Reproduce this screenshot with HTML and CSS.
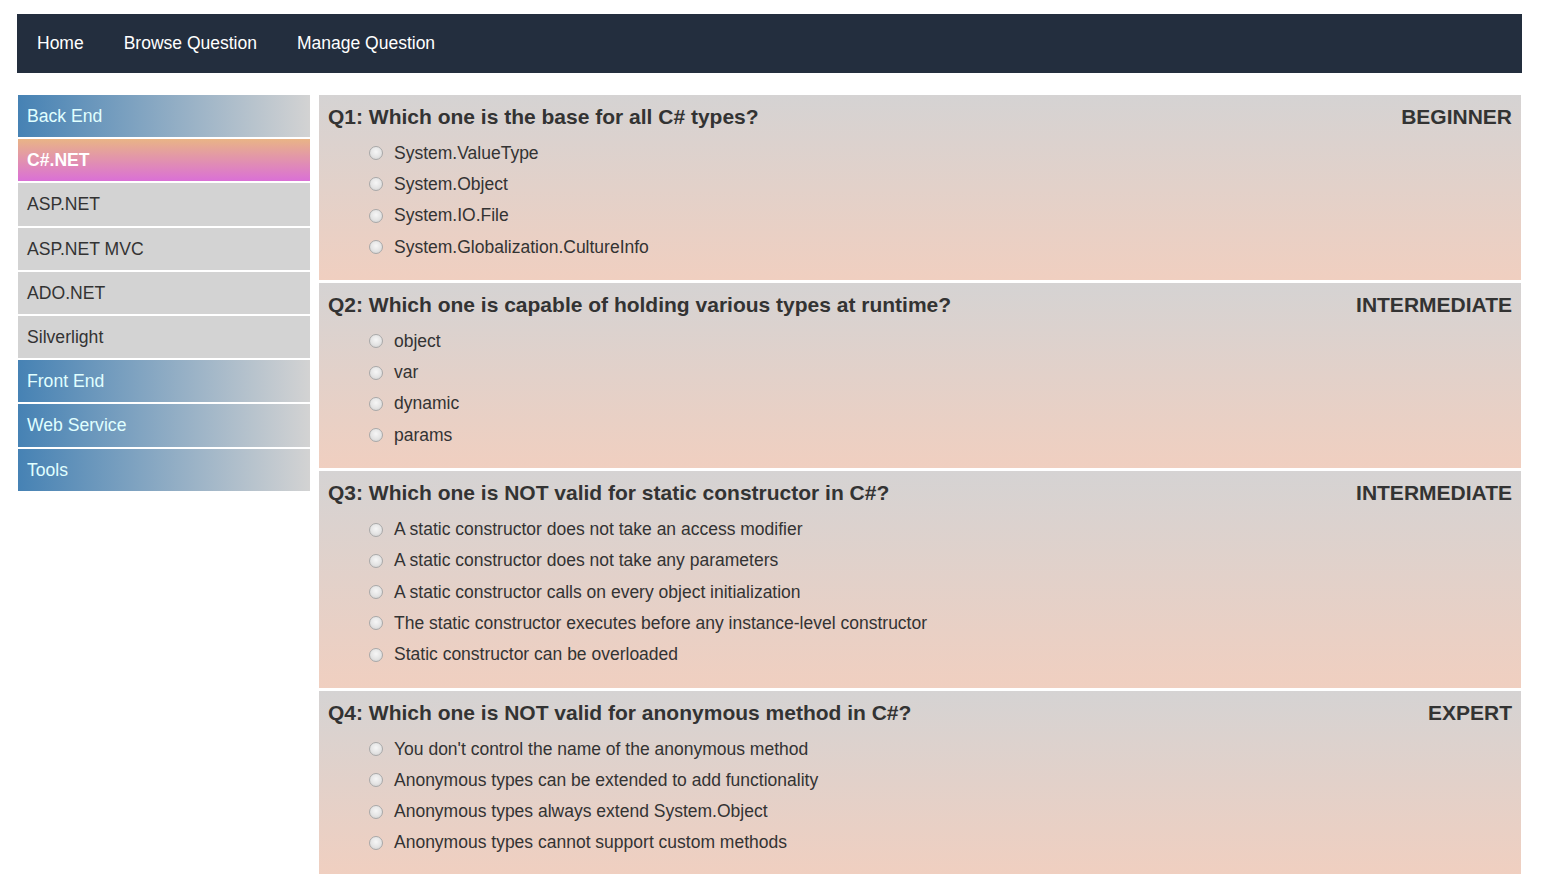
FILE: index.html
```html
<!DOCTYPE html>
<html>
<head>
<meta charset="utf-8">
<link rel="stylesheet" href="styles.css">
</head>
<body>
<div class="page">
  <nav class="navbar">
    <a class="nav-link" href="#">Home</a>
    <a class="nav-link" href="#">Browse Question</a>
    <a class="nav-link" href="#">Manage Question</a>
  </nav>
  <div class="content">
    <ul class="sidebar">
      <li class="side-item group">Back End</li>
      <li class="side-item active">C#.NET</li>
      <li class="side-item">ASP.NET</li>
      <li class="side-item">ASP.NET MVC</li>
      <li class="side-item">ADO.NET</li>
      <li class="side-item">Silverlight</li>
      <li class="side-item group">Front End</li>
      <li class="side-item group">Web Service</li>
      <li class="side-item group">Tools</li>
    </ul>
    <main class="questions">
      <section class="question">
        <div class="q-head"><span class="q-title">Q1: Which one is the base for all C# types?</span><span class="q-level">BEGINNER</span></div>
        <ul class="options">
          <li class="option"><input type="radio" name="q1" class="radio"><span>System.ValueType</span></li>
          <li class="option"><input type="radio" name="q1" class="radio"><span>System.Object</span></li>
          <li class="option"><input type="radio" name="q1" class="radio"><span>System.IO.File</span></li>
          <li class="option"><input type="radio" name="q1" class="radio"><span>System.Globalization.CultureInfo</span></li>
        </ul>
      </section>
      <section class="question">
        <div class="q-head"><span class="q-title">Q2: Which one is capable of holding various types at runtime?</span><span class="q-level">INTERMEDIATE</span></div>
        <ul class="options">
          <li class="option"><input type="radio" name="q2" class="radio"><span>object</span></li>
          <li class="option"><input type="radio" name="q2" class="radio"><span>var</span></li>
          <li class="option"><input type="radio" name="q2" class="radio"><span>dynamic</span></li>
          <li class="option"><input type="radio" name="q2" class="radio"><span>params</span></li>
        </ul>
      </section>
      <section class="question">
        <div class="q-head"><span class="q-title">Q3: Which one is NOT valid for static constructor in C#?</span><span class="q-level">INTERMEDIATE</span></div>
        <ul class="options">
          <li class="option"><input type="radio" name="q3" class="radio"><span>A static constructor does not take an access modifier</span></li>
          <li class="option"><input type="radio" name="q3" class="radio"><span>A static constructor does not take any parameters</span></li>
          <li class="option"><input type="radio" name="q3" class="radio"><span>A static constructor calls on every object initialization</span></li>
          <li class="option"><input type="radio" name="q3" class="radio"><span>The static constructor executes before any instance-level constructor</span></li>
          <li class="option"><input type="radio" name="q3" class="radio"><span>Static constructor can be overloaded</span></li>
        </ul>
      </section>
      <section class="question">
        <div class="q-head"><span class="q-title">Q4: Which one is NOT valid for anonymous method in C#?</span><span class="q-level">EXPERT</span></div>
        <ul class="options">
          <li class="option"><input type="radio" name="q4" class="radio"><span>You don't control the name of the anonymous method</span></li>
          <li class="option"><input type="radio" name="q4" class="radio"><span>Anonymous types can be extended to add functionality</span></li>
          <li class="option"><input type="radio" name="q4" class="radio"><span>Anonymous types always extend System.Object</span></li>
          <li class="option"><input type="radio" name="q4" class="radio"><span>Anonymous types cannot support custom methods</span></li>
        </ul>
      </section>
    </main>
  </div>
</div>
</body>
</html>
```
FILE: styles.css
```css
html, body {
  margin: 0;
  padding: 0;
  background: #ffffff;
  font-family: "Liberation Sans", Arial, sans-serif;
  color: #333333;
}

.page {
  padding: 14px 21px 0 17px;
}

.navbar {
  display: flex;
  align-items: center;
  height: 59px;
  background: #232e3e;
}

.nav-link {
  color: #ffffff;
  text-decoration: none;
  font-size: 17.5px;
  padding: 0 20px;
  line-height: 59px;
}

.content {
  display: flex;
  align-items: flex-start;
  gap: 9px;
  margin-top: 22px;
  padding-left: 1px;
}

.sidebar {
  list-style: none;
  margin: 0;
  padding: 0;
  width: 292px;
  flex: none;
  display: flex;
  flex-direction: column;
  gap: 2px;
}

.side-item {
  height: 42.2px;
  line-height: 42.2px;
  padding-left: 9px;
  font-size: 17.6px;
  background: #d3d3d3;
  color: #333333;
}

.side-item.group {
  background: linear-gradient(to right, #4682b4, #d3d3d3);
  color: #e0ffff;
}

.side-item.active {
  background: linear-gradient(#e9b486, #da70d6);
  color: #ffffff;
  font-weight: bold;
}

.questions {
  flex: 1;
  display: flex;
  flex-direction: column;
  gap: 3px;
  margin-right: 1px;
}

.question {
  padding: 9px;
  background: linear-gradient(#d5d3d3, #f0cfc0);
}

.q-head {
  display: flex;
  justify-content: space-between;
  font-size: 21px;
  line-height: 26px;
  font-weight: bold;
  color: #333333;
}

.options {
  list-style: none;
  margin: 7.5px 0 8.5px;
  padding: 0 0 0 41px;
}

.option {
  display: flex;
  align-items: center;
  height: 31.3px;
  font-size: 17.5px;
}

.radio {
  appearance: none;
  -webkit-appearance: none;
  box-sizing: border-box;
  width: 14px;
  height: 14px;
  margin: 0 11px 0 0;
  border-radius: 50%;
  border: 1px solid #a9a9a9;
  background: radial-gradient(circle at 50% 40%, #f6f6f6 0%, #e4e4e4 55%, #cccccc 100%);
  flex: none;
}
```
